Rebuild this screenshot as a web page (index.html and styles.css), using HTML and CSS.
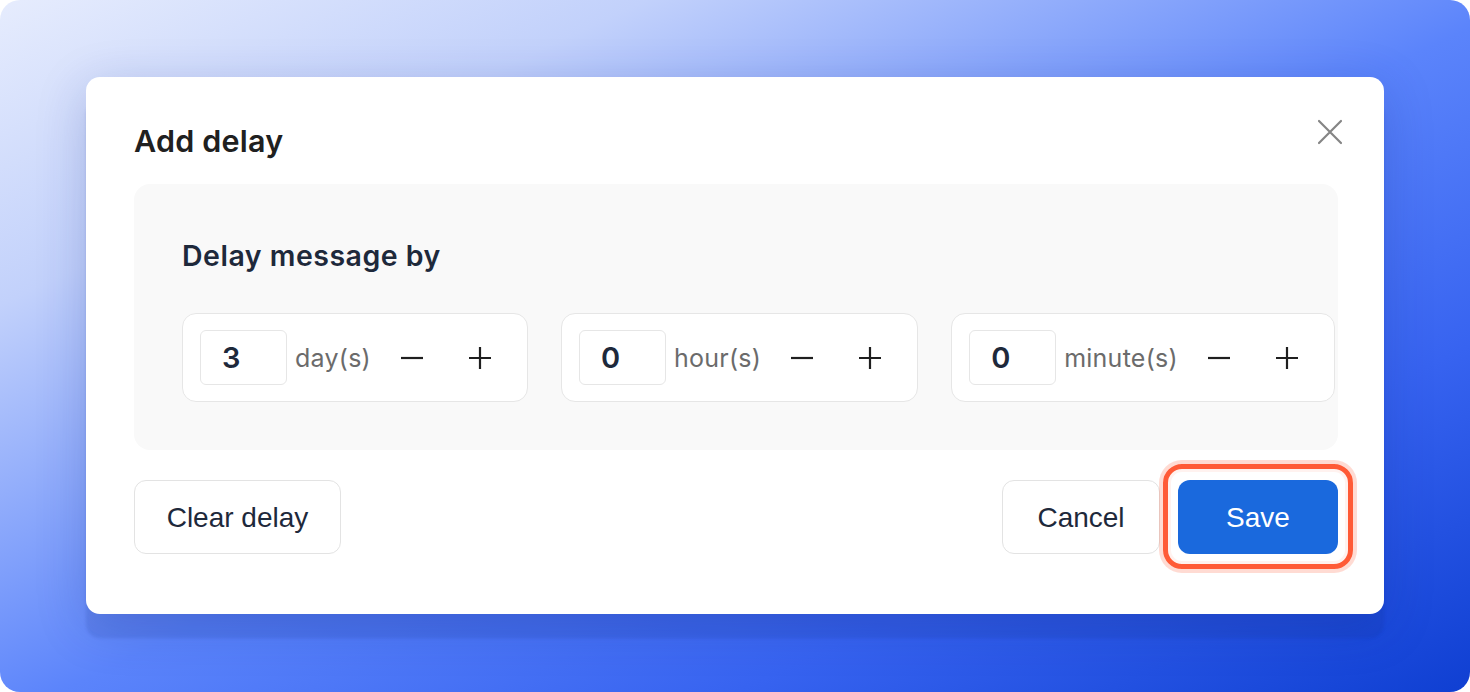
FILE: index.html
```html
<!DOCTYPE html>
<html lang="en">
<head>
<meta charset="utf-8">
<title>Add delay</title>
<link rel="stylesheet" href="styles.css">
</head>
<body>
<div class="backdrop">
  <div class="modal" role="dialog" aria-labelledby="dlg-title">
    <div class="modal-header">
      <h2 class="modal-title" id="dlg-title">Add delay</h2>
      <button class="close-btn" aria-label="Close">
        <svg width="26" height="26" viewBox="0 0 26 26" fill="none" stroke="#858585" stroke-width="2.2" stroke-linecap="round">
          <path d="M2 2 L24 24 M24 2 L2 24"/>
        </svg>
      </button>
    </div>

    <section class="panel">
      <h3 class="panel-title">Delay message by</h3>
      <div class="counters">
        <div class="counter">
          <div class="counter-input">3</div>
          <span class="counter-unit">day(s)</span>
          <button class="step-btn" aria-label="Decrease days">
            <svg width="24" height="24" viewBox="0 0 24 24" stroke="#1f1f1f" stroke-width="2.2"><path d="M1 12 H23"/></svg>
          </button>
          <button class="step-btn" aria-label="Increase days">
            <svg width="24" height="24" viewBox="0 0 24 24" stroke="#1f1f1f" stroke-width="2.2"><path d="M1 12 H23 M12 1 V23"/></svg>
          </button>
        </div>
        <div class="counter">
          <div class="counter-input">0</div>
          <span class="counter-unit">hour(s)</span>
          <button class="step-btn" aria-label="Decrease hours">
            <svg width="24" height="24" viewBox="0 0 24 24" stroke="#1f1f1f" stroke-width="2.2"><path d="M1 12 H23"/></svg>
          </button>
          <button class="step-btn" aria-label="Increase hours">
            <svg width="24" height="24" viewBox="0 0 24 24" stroke="#1f1f1f" stroke-width="2.2"><path d="M1 12 H23 M12 1 V23"/></svg>
          </button>
        </div>
        <div class="counter">
          <div class="counter-input">0</div>
          <span class="counter-unit">minute(s)</span>
          <button class="step-btn" aria-label="Decrease minutes">
            <svg width="24" height="24" viewBox="0 0 24 24" stroke="#1f1f1f" stroke-width="2.2"><path d="M1 12 H23"/></svg>
          </button>
          <button class="step-btn" aria-label="Increase minutes">
            <svg width="24" height="24" viewBox="0 0 24 24" stroke="#1f1f1f" stroke-width="2.2"><path d="M1 12 H23 M12 1 V23"/></svg>
          </button>
        </div>
      </div>
    </section>

    <div class="modal-footer">
      <button class="btn btn-clear">Clear delay</button>
      <div class="footer-actions">
        <button class="btn btn-cancel">Cancel</button>
        <button class="btn btn-save">Save</button>
      </div>
    </div>
  </div>
</div>
</body>
</html>
```

FILE: styles.css
```css
* {
  box-sizing: border-box;
}

html,
body {
  margin: 0;
  background: #ffffff;
}

body {
  font-family: Inter, "Noto Sans", sans-serif;
  color: #1e293b;
}

button {
  font: inherit;
  background: none;
  border: none;
  padding: 0;
  margin: 0;
  cursor: pointer;
}

/* gradient canvas behind the dialog */
.backdrop {
  width: 1470px;
  height: 692px;
  border-radius: 20px;
  overflow: hidden;
  background: linear-gradient(to bottom right, #e6ecfd 0%, #c2d1fb 22%, #5b84fb 52%, #3763f0 75%, #0f3fd2 100%);
  padding: 77px 86px 0 86px;
}

.modal {
  height: 537px;
  background: #ffffff;
  border-radius: 14px;
  padding: 46px 46px 0 48px;
  box-shadow: 0 24px 3px rgba(20, 40, 130, 0.12), 0 12px 50px rgba(20, 40, 140, 0.22);
}

.modal-header {
  display: flex;
  align-items: flex-start;
  justify-content: space-between;
  height: 36px;
}

.modal-title {
  margin: 0;
  font-size: 30.5px;
  line-height: 36px;
  font-weight: 600;
  color: #202020;
  letter-spacing: 0.2px;
}

.close-btn {
  display: flex;
  margin: -4px -5px 0 0;
}

.panel {
  margin-top: 25px;
  height: 266px;
  background: #f9f9f9;
  border-radius: 16px;
  padding: 55px 0 0 48px;
  overflow: hidden;
}

.panel-title {
  margin: 0;
  font-size: 28.5px;
  line-height: 34px;
  font-weight: 600;
  color: #1e293b;
  letter-spacing: 0.5px;
}

.counters {
  display: flex;
  gap: 33px;
  margin-top: 40px;
}

.counter {
  flex: none;
  display: flex;
  align-items: center;
  background: #ffffff;
  border: 1px solid #e6e6e6;
  border-radius: 14px;
  padding: 16px 24px 16px 17px;
}

.counter-input {
  width: 87px;
  height: 55px;
  border: 1px solid #e6e6e6;
  border-radius: 6px;
  background: #ffffff;
  padding-left: 21px;
  display: flex;
  align-items: center;
  font-size: 29px;
  font-weight: 600;
  color: #1e293b;
}

.counter-unit {
  margin-left: 8px;
  font-size: 25px;
  letter-spacing: 0.25px;
  color: #6b6b6b;
}

.step-btn {
  width: 46px;
  height: 46px;
  display: flex;
  align-items: center;
  justify-content: center;
}

.counter-unit + .step-btn {
  margin-left: 18px;
}

.step-btn + .step-btn {
  margin-left: 22px;
}

.modal-footer {
  margin-top: 30px;
  display: flex;
  justify-content: space-between;
  align-items: center;
}

.footer-actions {
  display: flex;
  gap: 18px;
}

.btn {
  height: 74px;
  border-radius: 12px;
  font-family: "Liberation Sans", Arial, sans-serif;
  font-size: 28px;
  color: #1e293b;
  display: flex;
  align-items: center;
  justify-content: center;
  padding-top: 2px;
}

.btn-clear {
  width: 207px;
  border: 1px solid #e3e3e3;
  background: #ffffff;
}

.btn-cancel {
  width: 158px;
  border: 1px solid #e3e3e3;
  background: #ffffff;
}

.btn-save {
  position: relative;
  width: 160px;
  background: #1a69dd;
  color: #ffffff;
}

/* keyboard focus ring drawn around the primary action */
.btn-save::after {
  content: "";
  position: absolute;
  inset: -16px -15px -15px -15px;
  border: 5px solid #ff5a36;
  border-radius: 19px;
  box-shadow: 0 0 0 4px rgba(255, 90, 54, 0.22), inset 0 0 0 3px rgba(255, 90, 54, 0.08);
  pointer-events: none;
}
```
